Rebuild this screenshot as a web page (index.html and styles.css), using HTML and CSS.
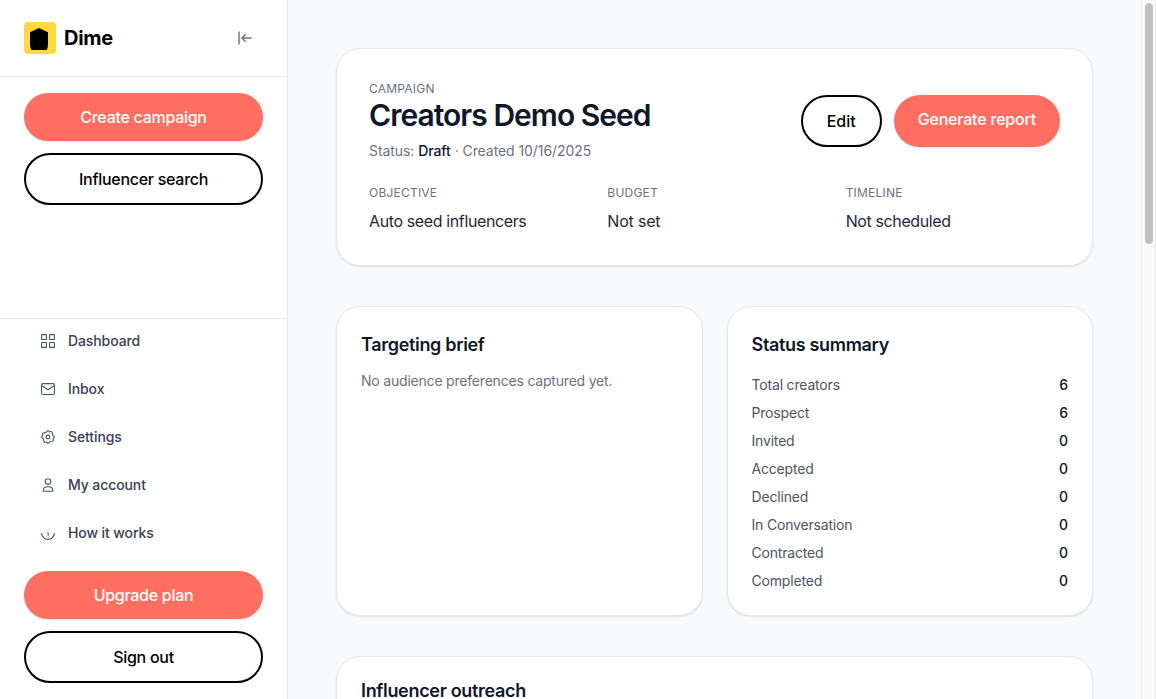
FILE: index.html
```html
<!DOCTYPE html>
<html lang="en">
<head>
<meta charset="utf-8">
<title>Dime</title>
<link rel="stylesheet" href="styles.css">
</head>
<body>
<div class="app">
  <aside class="sidebar">
    <header class="brand">
      <svg class="logo" viewBox="0 0 32 32"><rect width="32" height="32" rx="4" fill="#ffd93d"/><path d="M15 6l9 4.300v11.700q0 4-1.500 6h-15q-1.500-2-1.500-6V10.300z" fill="#000"/></svg>
      <span class="brand-name">Dime</span>
      <svg class="collapse" viewBox="0 0 16 16"><path d="M2 1.500v13M14.600 8H5.200M8.700 4.300L5 8l3.700 3.700"/></svg>
    </header>
    <div class="actions">
      <button class="btn primary">Create campaign</button>
      <button class="btn outline">Influencer search</button>
    </div>
    <nav class="nav">
      <a class="nav-item"><svg viewBox="0 0 16 16"><rect x="1.600" y="1.600" width="4.900" height="4.900" rx=".3"/><rect x="9.500" y="1.600" width="4.900" height="4.900" rx=".3"/><rect x="1.600" y="9.500" width="4.900" height="4.900" rx=".3"/><rect x="9.500" y="9.500" width="4.900" height="4.900" rx=".3"/></svg>Dashboard</a>
      <a class="nav-item"><svg viewBox="0 0 16 16"><rect x="1.600" y="2.600" width="12.800" height="10.900" rx="1.600"/><path d="M2 4.800l6 4 6-4"/></svg>Inbox</a>
      <a class="nav-item"><svg viewBox="0 0 16 16"><path d="M6.600 2.900Q8 .3 9.400 2.900Q12.400 1.800 12.300 4.200Q12.200 5 13.100 6.600Q15.700 8 13.100 9.400Q14.200 12.400 11.800 12.300Q11 12.200 9.400 13.100Q8 15.700 6.600 13.100Q3.600 14.200 3.700 11.800Q3.800 11 2.900 9.400Q.3 8 2.900 6.600Q1.800 3.600 4.200 3.700Q5 3.800 6.600 2.900z"/><circle cx="8" cy="8" r="1.900"/></svg>Settings</a>
      <a class="nav-item"><svg viewBox="0 0 16 16"><circle cx="8" cy="4.500" r="2.800"/><path d="M3.200 14.200v-.7C3.200 11.200 5.300 9.700 8 9.700s4.800 1.500 4.800 3.800v.7z"/></svg>My account</a>
      <a class="nav-item"><svg viewBox="0 0 16 16"><path d="M1.600 8a6.400 6.400 0 0 0 12.800 0M8.200 7.800v3M7.300 7.800h.9"/><path d="M8 5.400v.3"/></svg>How it works</a>
    </nav>
    <div class="footer">
      <button class="btn primary">Upgrade plan</button>
      <button class="btn outline">Sign out</button>
    </div>
  </aside>
  <main class="main">
    <section class="card campaign">
      <div class="campaign-head">
        <div>
          <p class="label">CAMPAIGN</p>
          <h1>Creators Demo Seed</h1>
          <p class="status">Status: <strong>Draft</strong> · Created 10/16/2025</p>
        </div>
        <div class="head-actions">
          <button class="btn outline edit">Edit</button>
          <a class="btn primary report">Generate report</a>
        </div>
      </div>
      <div class="facts">
        <div><p class="label">OBJECTIVE</p><p class="value">Auto seed influencers</p></div>
        <div><p class="label">BUDGET</p><p class="value short">Not set</p></div>
        <div><p class="label">TIMELINE</p><p class="value">Not scheduled</p></div>
      </div>
    </section>
    <div class="columns">
      <section class="card panel">
        <h2>Targeting brief</h2>
        <p class="empty">No audience preferences captured yet.</p>
      </section>
      <section class="card panel">
        <h2>Status summary</h2>
        <dl class="summary">
          <div><dt>Total creators</dt><dd>6</dd></div>
          <div><dt>Prospect</dt><dd>6</dd></div>
          <div><dt>Invited</dt><dd>0</dd></div>
          <div><dt>Accepted</dt><dd>0</dd></div>
          <div><dt>Declined</dt><dd>0</dd></div>
          <div><dt>In Conversation</dt><dd>0</dd></div>
          <div><dt>Contracted</dt><dd>0</dd></div>
          <div><dt>Completed</dt><dd>0</dd></div>
        </dl>
      </section>
    </div>
    <section class="card panel outreach"><h2>Influencer outreach</h2></section>
  </main>
  <div class="scrollbar"><div class="thumb"></div></div>
</div>
</body>
</html>
```
FILE: styles.css
```css
* { box-sizing: border-box; margin: 0; }
body { font: 400 16px/24px Inter, "Liberation Sans", sans-serif; color: #0f172a; background: #f8fafc; overflow: hidden; }
.app { display: flex; height: 699px; overflow: hidden; }

.sidebar { width: 288px; flex: none; display: flex; flex-direction: column; background: #fff; border-right: 1px solid #e5e7eb; }
.brand { display: flex; align-items: center; height: 77px; padding: 0 34px 0 24px; border-bottom: 1px solid #e5e7eb; }
.logo { width: 32px; height: 32px; }
.brand-name { margin-left: 8px; font-size: 20px; line-height: 28px; font-weight: 700; letter-spacing: -0.3px; color: #000; }
.collapse { width: 16px; height: 16px; margin-left: auto; fill: none; stroke: #6b7280; stroke-width: 1.4; }
.actions { display: flex; flex-direction: column; gap: 12px; flex: 1; padding: 16px 24px; }
.nav { display: flex; flex-direction: column; gap: 8px; padding: 2px 24px 2px; border-top: 1px solid #e5e7eb; }
.nav-item { display: flex; align-items: center; gap: 12px; height: 40px; padding: 0 16px; font-size: 14px; line-height: 20px; font-weight: 500; letter-spacing: -.1px; color: #374151; }
.nav-item svg { width: 16px; height: 16px; fill: none; stroke: #475569; stroke-width: 1.1; stroke-linejoin: round; }
.footer { display: flex; flex-direction: column; gap: 12px; padding: 16px 24px; }

.btn { display: block; font: 500 16px/24px Inter, "Liberation Sans", sans-serif; letter-spacing: -.28px; text-align: center; padding: 12px 24px; border-radius: 26px; border: 0; }
.primary { color: #fff; background: #ff6f61; box-shadow: 0 1px 2px rgba(0, 0, 0, .12); }
.outline { color: #000; background: #fff; border: 2px solid #000; }
.edit { letter-spacing: 0; }
.report { letter-spacing: -.2px; }

.main { flex: 1; min-width: 0; display: flex; flex-direction: column; gap: 40px; padding: 48px; }
.card { flex: none; background: #fff; border: 1px solid #e5e7eb; border-radius: 24px; box-shadow: 0 1px 2px rgba(0, 0, 0, .1); }
.campaign { padding: 32px; }
.campaign-head { display: flex; align-items: center; justify-content: space-between; }
.head-actions { display: flex; gap: 12px; }
.label { font-size: 12px; line-height: 16px; letter-spacing: .22px; color: #6b7280; }
h1 { font-size: 30px; line-height: 36px; font-weight: 600; letter-spacing: -.97px; }
.status { margin-top: 8px; font-size: 14px; line-height: 20px; letter-spacing: -.07px; color: #6b7280; }
.status strong { font-weight: 500; color: #0f172a; }
.facts { display: grid; grid-template-columns: repeat(3, 1fr); gap: 24px; margin-top: 24px; }
.value { margin-top: 8px; letter-spacing: -.38px; color: #1e293b; }
.short { letter-spacing: -.2px; }
.columns { display: grid; grid-template-columns: 1fr 1fr; gap: 24px; }
.panel { padding: 24px; }
.outreach { height: 200px; padding-top: 20px; }
h2 { font-size: 18px; line-height: 28px; font-weight: 600; letter-spacing: -.32px; }
.empty { margin-top: 12px; font-size: 14px; line-height: 20px; letter-spacing: -.2px; color: #6b7280; }
.summary { display: flex; flex-direction: column; gap: 8px; margin-top: 16px; font-size: 14px; line-height: 20px; }
.summary div { display: flex; justify-content: space-between; }
dt { color: #4b5563; letter-spacing: -.18px; }
dd { margin: 0; font-weight: 500; color: #0f172a; }

.scrollbar { width: 15px; flex: none; padding: 3px 2px 0 3px; background: #fafafa; border: solid #e8e8e8; border-width: 0 1px; }
.thumb { width: 8px; height: 241px; border-radius: 4px; background: #c1c1c1; }
```
